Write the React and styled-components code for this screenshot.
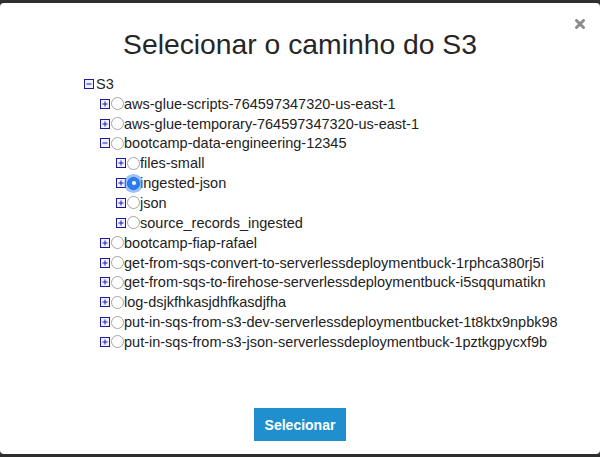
import React, { useState } from "react";
import styled, { createGlobalStyle } from "styled-components";

const GlobalStyle = createGlobalStyle`
  html, body {
    margin: 0;
    padding: 0;
    background: #2e2e2e;
    font-family: "Liberation Sans", Arial, Helvetica, sans-serif;
  }
`;

const Backdrop = styled.div`
  width: 600px;
  height: 457px;
  padding: 3px 0;
  box-sizing: border-box;
  background: #2e2e2e;
`;

const Modal = styled.div`
  position: relative;
  height: 451px;
  background: #fff;
  border-radius: 4px;
  display: flex;
  flex-direction: column;
`;

const Close = styled.button`
  position: absolute;
  top: 16px;
  right: 15px;
  border: none;
  background: none;
  padding: 0;
  width: 10px;
  height: 10px;
  display: flex;
  cursor: pointer;
`;

const Title = styled.h1`
  margin: 23px 0 0;
  text-align: center;
  font-size: 28.3px;
  font-weight: 400;
  line-height: 36px;
  color: #262626;
`;

const TreeBox = styled.div`
  padding: 12px 0 0 84px;
  flex: 1;
`;

const List = styled.ul`
  list-style: none;
  margin: 0;
  padding: 0 0 0 ${(p) => (p.$root ? 0 : 16)}px;
`;

const Row = styled.div`
  display: flex;
  align-items: center;
  height: 19.85px;
  font-size: 14.5px;
  color: #222;
  white-space: nowrap;
`;

const Toggle = styled.svg`
  width: 10px;
  height: 10px;
  flex: none;
  margin-right: ${(p) => (p.$gap ? 2 : 1)}px;
`;

const Radio = styled.span`
  position: relative;
  width: 13px;
  height: 13px;
  flex: none;
  border-radius: 50%;
  box-sizing: border-box;
  border: 1px solid ${(p) => (p.$checked ? "#1a6fe6" : "#a6a6a6")};
  background: ${(p) => (p.$checked ? "#2d7cf0" : "#fff")};
  box-shadow: ${(p) =>
    p.$checked ? "0 0 0 3px rgba(88, 152, 250, 0.6)" : "none"};

  &::after {
    content: "";
    display: ${(p) => (p.$checked ? "block" : "none")};
    position: absolute;
    left: 50%;
    top: 50%;
    width: 4px;
    height: 4px;
    margin: -2px 0 0 -2px;
    border-radius: 50%;
    background: #fff;
  }
`;

const Footer = styled.div`
  display: flex;
  justify-content: center;
  padding-bottom: 13px;
`;

const Button = styled.button`
  background: #1f8fcd;
  color: #fff;
  border: none;
  padding: 0 11px;
  height: 33px;
  font-size: 14px;
  font-weight: bold;
  font-family: "Liberation Sans", Arial, sans-serif;
  cursor: pointer;
`;

const ToggleIcon = ({ open, gap }) => (
  <Toggle viewBox="0 0 10 10" $gap={gap}>
    <rect x="0.5" y="0.5" width="9" height="9" fill="#eef0ff" stroke="#1c1c9a" />
    <line x1="2.5" y1="5" x2="7.5" y2="5" stroke="#1c1c9a" />
    {!open && <line x1="5" y1="2.5" x2="5" y2="7.5" stroke="#1c1c9a" />}
  </Toggle>
);

const tree = [
  { name: "aws-glue-scripts-764597347320-us-east-1" },
  { name: "aws-glue-temporary-764597347320-us-east-1" },
  {
    name: "bootcamp-data-engineering-12345",
    open: true,
    children: [
      { name: "files-small" },
      { name: "ingested-json" },
      { name: "json" },
      { name: "source_records_ingested" },
    ],
  },
  { name: "bootcamp-fiap-rafael" },
  { name: "get-from-sqs-convert-to-serverlessdeploymentbuck-1rphca380rj5i" },
  { name: "get-from-sqs-to-firehose-serverlessdeploymentbuck-i5sqqumatikn" },
  { name: "log-dsjkfhkasjdhfkasdjfha" },
  { name: "put-in-sqs-from-s3-dev-serverlessdeploymentbucket-1t8ktx9npbk98" },
  { name: "put-in-sqs-from-s3-json-serverlessdeploymentbuck-1pztkgpycxf9b" },
];

function Node({ node, path, selected, onSelect }) {
  return (
    <li>
      <Row>
        <ToggleIcon open={node.open} />
        <Radio $checked={selected === path} onClick={() => onSelect(path)} />
        {node.name}
      </Row>
      {node.open && node.children && (
        <List>
          {node.children.map((c) => (
            <Node
              key={c.name}
              node={c}
              path={path + "/" + c.name}
              selected={selected}
              onSelect={onSelect}
            />
          ))}
        </List>
      )}
    </li>
  );
}

export default function App() {
  const [selected, setSelected] = useState(
    "bootcamp-data-engineering-12345/ingested-json"
  );

  return (
    <Backdrop>
      <GlobalStyle />
      <Modal>
        <Close aria-label="Fechar">
          <svg width="10" height="10" viewBox="0 0 10 10">
            <path
              d="M1.5 1.5 L8.5 8.5 M8.5 1.5 L1.5 8.5"
              stroke="#8a8a8a"
              strokeWidth="2.8"
              strokeLinecap="square"
            />
          </svg>
        </Close>
        <Title>Selecionar o caminho do S3</Title>
        <TreeBox>
          <List $root>
            <li>
              <Row>
                <ToggleIcon open gap />
                S3
              </Row>
              <List>
                {tree.map((n) => (
                  <Node
                    key={n.name}
                    node={n}
                    path={n.name}
                    selected={selected}
                    onSelect={setSelected}
                  />
                ))}
              </List>
            </li>
          </List>
        </TreeBox>
        <Footer>
          <Button>Selecionar</Button>
        </Footer>
      </Modal>
    </Backdrop>
  );
}
